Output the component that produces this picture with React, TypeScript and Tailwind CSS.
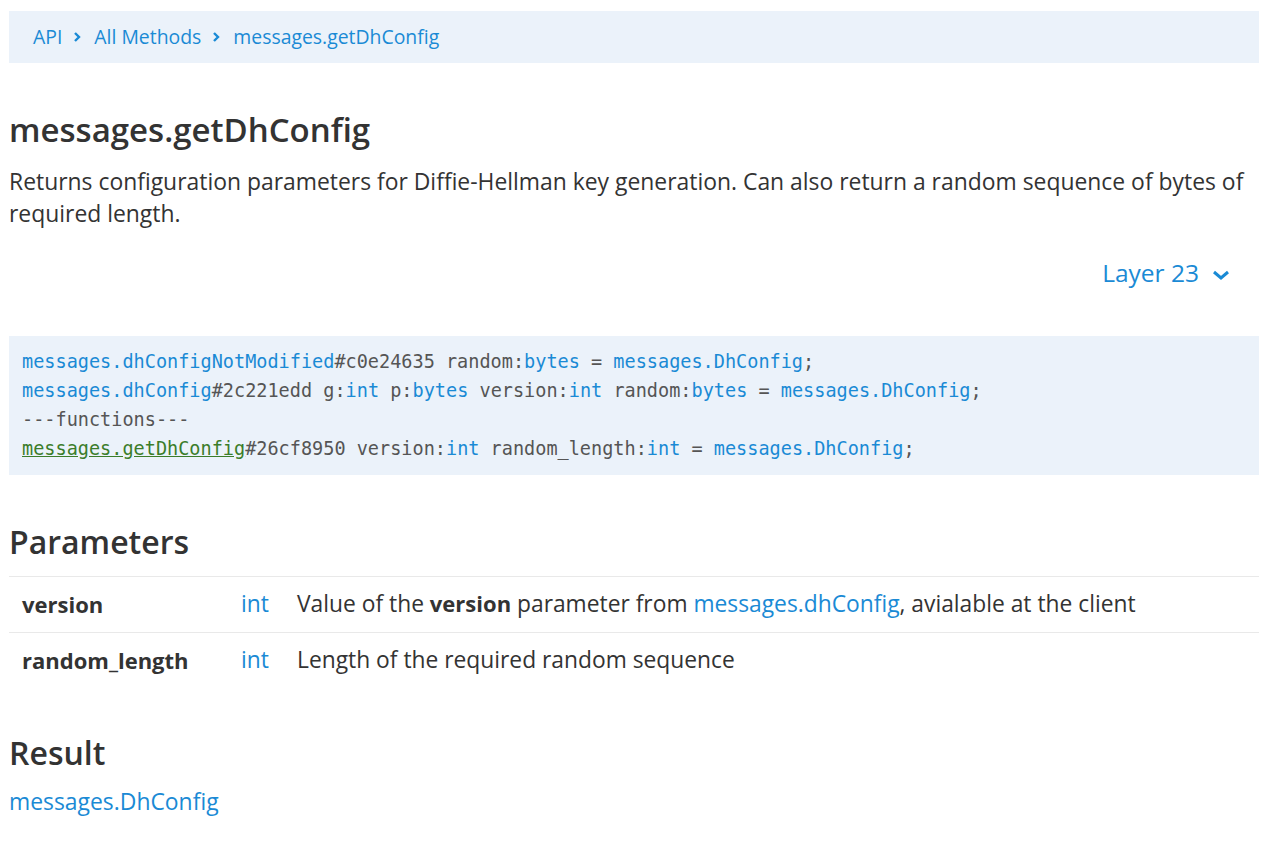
import React from "react";

const F = { fontFamily: '"Open Sans", "Noto Sans", sans-serif' };
const M = { fontFamily: '"DejaVu Sans Mono", "Liberation Mono", monospace' };

function Chevron() {
  return (
    <svg width="10" height="14" viewBox="0 0 10 14" className="ml-[10px] mr-[12px]">
      <path d="M3 3 L7 7 L3 11" fill="none" stroke="#1a8ad5" strokeWidth="2.4" />
    </svg>
  );
}

export default function App() {
  const b = "text-[#1a8ad5]";
  const g = "text-[#555]";
  return (
    <div className="w-[1275px] h-[851px] bg-white text-[#333] pl-[9px] pr-[16px] pt-[11px]" style={F}>
      <div className="h-[52px] bg-[#ebf2fa] flex items-center pl-[24px] text-[19.4px] text-[#1a8ad5]">
        <span>API</span>
        <Chevron />
        <span>All Methods</span>
        <Chevron />
        <span>messages.getDhConfig</span>
      </div>

      <h1 className="mt-[45px] text-[33px] leading-[44px] font-semibold text-[#333]">messages.getDhConfig</h1>
      <p className="mt-[14px] text-[22.9px] leading-[32px] pr-[10px]">
        Returns configuration parameters for Diffie-Hellman key generation. Can also return a random sequence of bytes of required length.
      </p>

      <div className="flex justify-end items-center mt-[16px] pr-[28px] text-[24.5px] text-[#1a8ad5] h-[54px]">
        <span>Layer 23</span>
        <svg width="20" height="14" viewBox="0 0 20 14" className="ml-[12px] mt-[4px]">
          <path d="M3 4 L10 10 L17 4" fill="none" stroke="#1a8ad5" strokeWidth="3" />
        </svg>
      </div>

      <div className="mt-[36px] bg-[#ebf2fa] pl-[13px] pt-[10.5px] pb-[12.5px] text-[18.55px] leading-[29px]" style={M}>
        <div className="whitespace-pre">
          <span className={b}>messages.dhConfigNotModified</span><span className={g}>#c0e24635 random:</span><span className={b}>bytes</span><span className={g}> = </span><span className={b}>messages.DhConfig</span><span className={g}>;</span>
        </div>
        <div className="whitespace-pre">
          <span className={b}>messages.dhConfig</span><span className={g}>#2c221edd g:</span><span className={b}>int</span><span className={g}> p:</span><span className={b}>bytes</span><span className={g}> version:</span><span className={b}>int</span><span className={g}> random:</span><span className={b}>bytes</span><span className={g}> = </span><span className={b}>messages.DhConfig</span><span className={g}>;</span>
        </div>
        <div className={"whitespace-pre " + g}>---functions---</div>
        <div className="whitespace-pre">
          <span className="text-[#3b7d2a] underline">messages.getDhConfig</span><span className={g}>#26cf8950 version:</span><span className={b}>int</span><span className={g}> random_length:</span><span className={b}>int</span><span className={g}> = </span><span className={b}>messages.DhConfig</span><span className={g}>;</span>
        </div>
      </div>

      <h3 className="mt-[45px] text-[32px] leading-[44px] font-semibold">Parameters</h3>
      <div className="mt-[12px] text-[22.8px]">
        <div className="flex items-center h-[56px] border-t border-[#e9e9e9]">
          <div className="w-[232px] pl-[13px] font-bold text-[22px]">version</div>
          <div className={"w-[56px] " + b}>int</div>
          <div>Value of the <b className="text-[22px]">version</b> parameter from <span className={b}>messages.dhConfig</span>, avialable at the client</div>
        </div>
        <div className="flex items-center h-[56px] border-t border-[#e9e9e9]">
          <div className="w-[232px] pl-[13px] font-bold text-[22px]">random_length</div>
          <div className={"w-[56px] " + b}>int</div>
          <div>Length of the required random sequence</div>
        </div>
      </div>

      <h3 className="mt-[43px] text-[32px] leading-[44px] font-semibold">Result</h3>
      <div className={"mt-[11px] text-[22.9px] leading-[32px] " + b}>messages.DhConfig</div>
    </div>
  );
}
